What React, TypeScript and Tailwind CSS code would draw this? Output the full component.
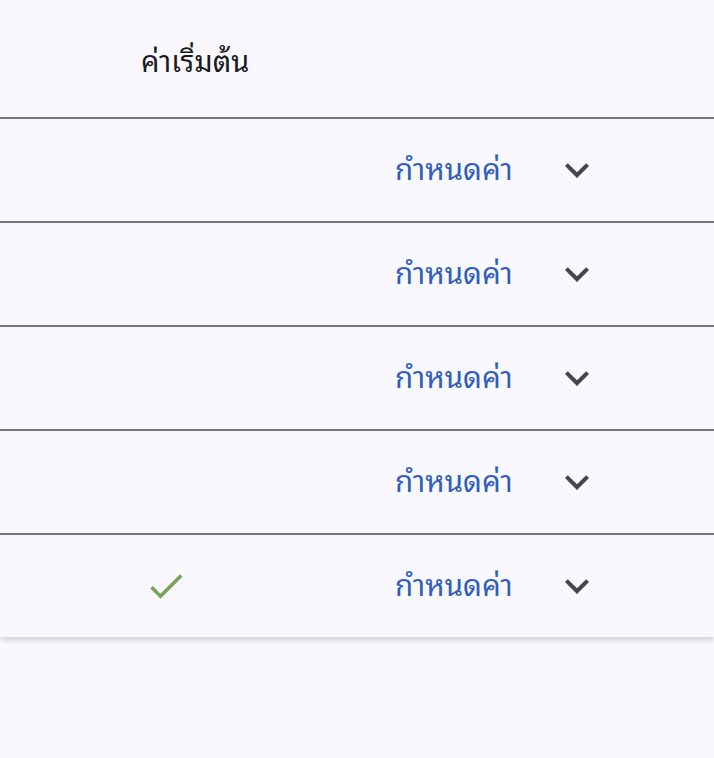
const rows = [false, false, false, false, true];

function ExpandMore() {
  return (
    <svg viewBox="0 0 24 24" className="h-12 w-12 fill-[#49454f]">
      <path d="M16.59 8.59L12 13.17 7.41 8.59 6 10l6 6 6-6z" />
    </svg>
  );
}

function Check() {
  return (
    <svg viewBox="0 0 24 24" className="h-11 w-11 fill-[#7aa35a]">
      <path d="M9 16.17L4.83 12l-1.42 1.41L9 19 21 7l-1.41-1.41z" />
    </svg>
  );
}

export default function App() {
  return (
    <div
      className="min-h-[758px] w-full overflow-hidden bg-[#f9f8fe]"
      style={{ fontFamily: "'Noto Sans Thai Looped', 'Noto Sans', Roboto, sans-serif" }}
    >
      <div className="shadow-[0_3px_6px_rgba(0,0,0,0.16)]">
        <div className="flex h-[117px] items-center pl-[141px] pt-[2px]">
          <span className="text-[29px] font-normal text-[#1c1b1f]">ค่าเริ่มต้น</span>
        </div>
        {rows.map((checked, i) => (
          <div key={i} className="flex h-[104px] items-center border-t-2 border-[#747378]">
            <div className="flex w-[395px] justify-start pl-[144px]">
              {checked && <Check />}
            </div>
            <span className="-mt-[5px] w-[158px] text-[29.5px] font-normal text-[#2f5fb8]">กำหนดค่า</span>
            <ExpandMore />
          </div>
        ))}
      </div>
    </div>
  );
}
